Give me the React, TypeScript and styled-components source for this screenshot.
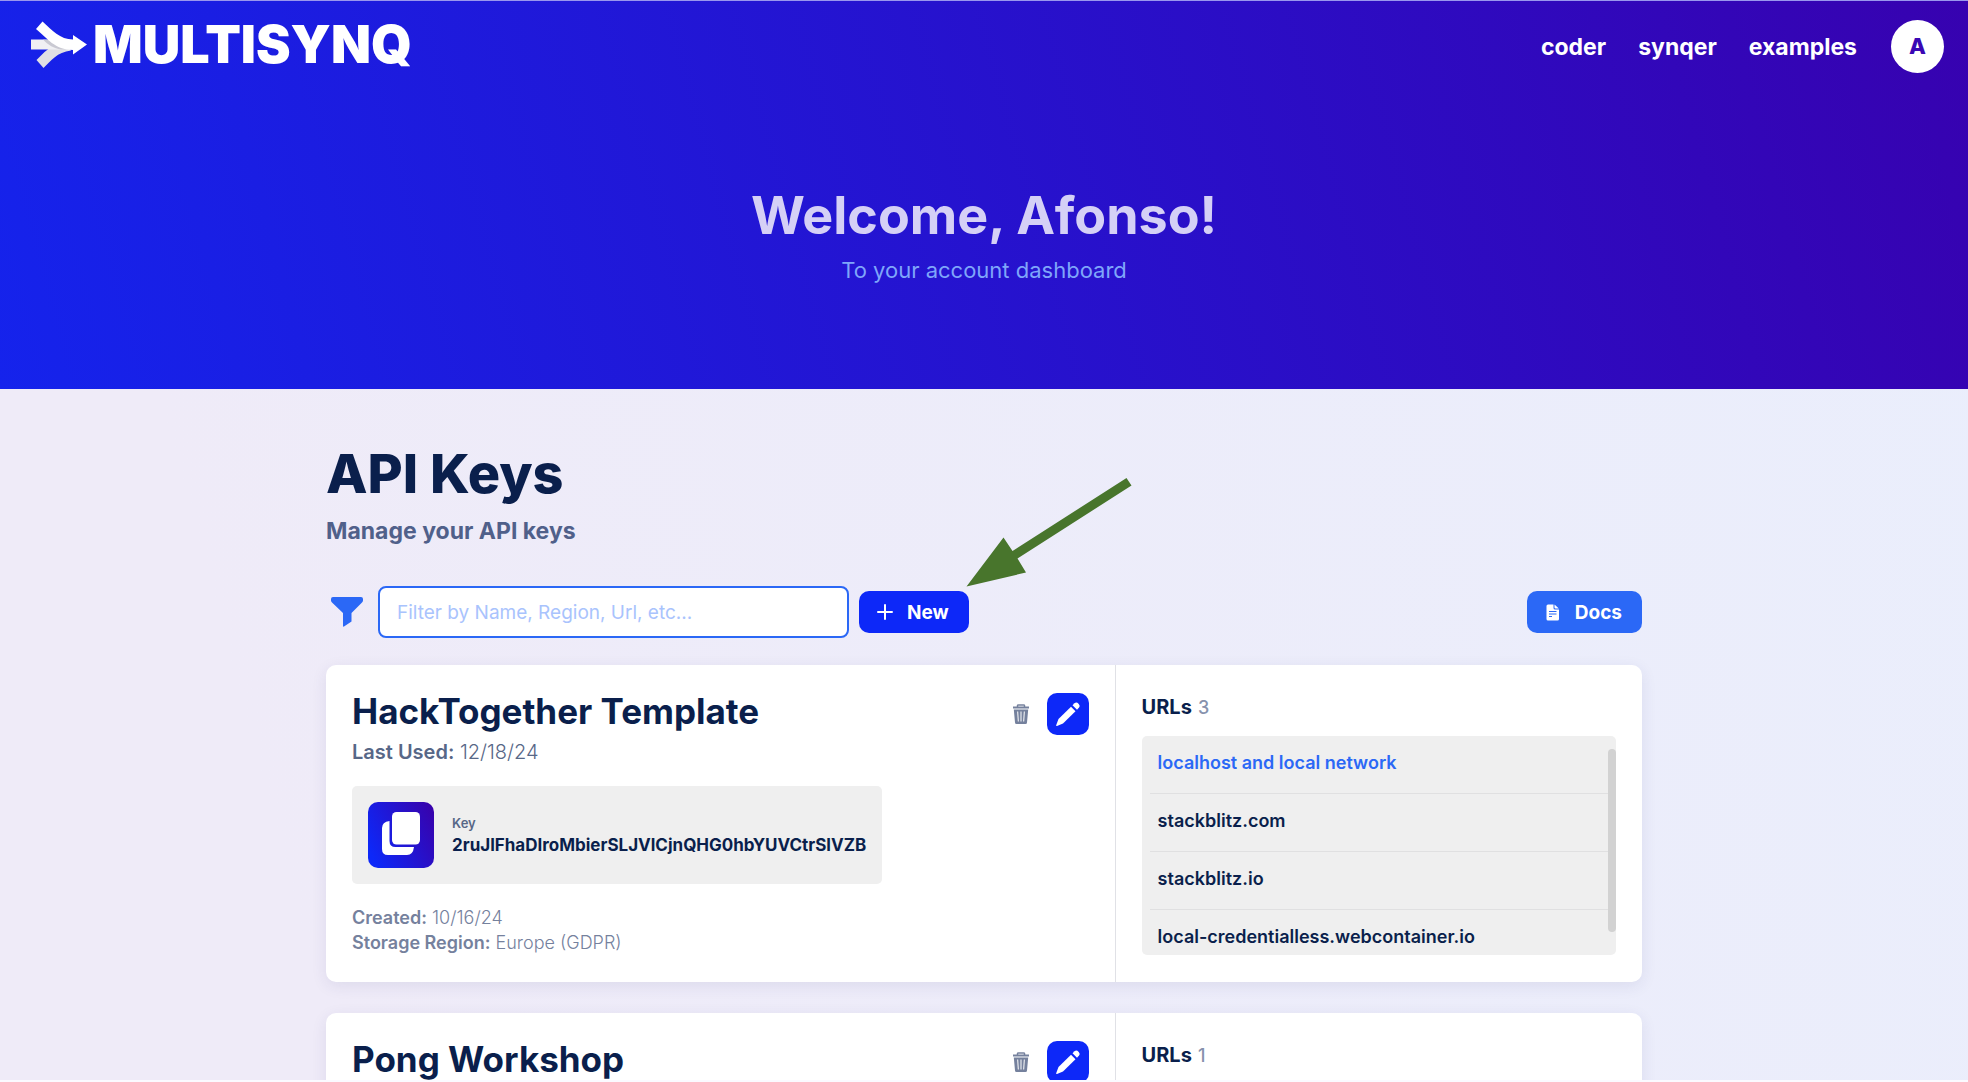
import React from 'react';
import styled, { createGlobalStyle } from 'styled-components';

const ink = '#0a1f4c';
const blue = '#2b68f6';
const strong = '#0d28f8';
const heroGradient = 'linear-gradient(75deg, #1523ec 0%, #3702b0 100%)';

const GlobalStyle = createGlobalStyle`
  * { box-sizing: border-box; }
  body {
    margin: 0;
    background: #ffffff;
    color: ${ink};
    font-family: Inter, "Liberation Sans", sans-serif;
  }
  h1, h2, h3, p, ul { margin: 0; padding: 0; }
  button, input { font: inherit; }
`;

const Shell = styled.div`
  height: 100vh;
  overflow-y: auto;
  scrollbar-width: none;
  border-top: 1px solid #9a97ee;
  border-bottom: 2px solid #fbfaff;
  background: linear-gradient(75deg, #efebf8 15%, #eaeefc 100%);
`;

const Hero = styled.header`
  min-height: 388px;
  background: ${heroGradient};
`;

const TopBar = styled.div`
  display: flex;
  align-items: center;
  justify-content: space-between;
  height: 90px;
  padding: 0 24px 0 31px;
`;

const Brand = styled.a`
  display: flex;
  align-items: center;
  gap: 4px;
  padding-bottom: 3px;
  color: #ffffff;
  text-decoration: none;
  font-size: 52px;
  line-height: 60px;
  font-weight: 900;
`;

const Nav = styled.nav`
  display: flex;
  align-items: center;
  gap: 32px;
`;

const NavLink = styled.a`
  padding-top: 2px;
  color: #ffffff;
  text-decoration: none;
  font-size: 23px;
  font-weight: 700;
`;

const Avatar = styled.button`
  width: 53px;
  height: 53px;
  margin-left: 2px;
  padding: 0;
  border: 0;
  border-radius: 50%;
  background: #ffffff;
  color: #3a07b4;
  font-size: 22px;
  font-weight: 800;
`;

const Welcome = styled.div`
  display: flex;
  flex-direction: column;
  align-items: center;
  gap: 8px;
  padding: 93px 24px 92px;
`;

const WelcomeTitle = styled.h1`
  color: #d5d0f6;
  font-size: 52px;
  line-height: 64px;
  font-weight: 700;
`;

const WelcomeText = styled.p`
  color: #7fa6fa;
  font-size: 22px;
  line-height: 28px;
`;

const Main = styled.main`
  width: 90%;
  max-width: 1316px;
  margin: 0 auto;
  padding: 53px 0 32px;
`;

const PageTitle = styled.h2`
  font-size: 54px;
  line-height: 64px;
  font-weight: 800;
`;

const PageText = styled.p`
  margin-top: 9px;
  color: #50608a;
  font-size: 23px;
  line-height: 32px;
  font-weight: 700;
`;

const Toolbar = styled.div`
  display: flex;
  align-items: center;
  gap: 10px;
  margin: 39px 0 27px;
`;

const FilterLabel = styled.label`
  display: flex;
  justify-content: center;
  width: 42px;
  color: ${blue};
`;

const FilterInput = styled.input`
  width: 471px;
  height: 52px;
  padding: 0 17px;
  border: 2px solid ${blue};
  border-radius: 8px;
  outline: 0;
  background: #ffffff;
  color: ${ink};
  font-size: 19px;
  &::placeholder { color: #a9c3fd; opacity: 1; }
`;

const Action = styled.button<{ $tone: string }>`
  display: flex;
  align-items: center;
  gap: 14px;
  height: 42px;
  padding: 0 20px 0 18px;
  border: 0;
  border-radius: 10px;
  background: ${(p) => p.$tone};
  color: #ffffff;
  font-size: 19px;
  font-weight: 700;
`;

const NewSlot = styled.div`
  position: relative;
`;

const Pointer = styled.svg`
  position: absolute;
  left: 107px;
  bottom: 46px;
  pointer-events: none;
`;

const Spacer = styled.div`
  flex: 1;
`;

const CardList = styled.div`
  display: flex;
  flex-direction: column;
  gap: 31px;
`;

const Card = styled.article`
  display: grid;
  grid-template-columns: 3fr 2fr;
  border-radius: 10px;
  background: #ffffff;
  box-shadow: 0 4px 16px rgba(40, 40, 110, 0.09);
`;

const Details = styled.section`
  padding: 24px 26px 26px;
  border-right: 1px solid #e0e1e6;
`;

const CardHead = styled.div`
  display: flex;
  align-items: flex-start;
  height: 46px;
`;

const CardTitle = styled.h3`
  flex: 1;
  font-size: 35px;
  line-height: 44px;
  font-weight: 700;
`;

const CardTools = styled.div`
  display: flex;
  align-items: center;
  gap: 17px;
  padding-top: 4px;
`;

const TrashButton = styled.button`
  display: flex;
  padding: 0;
  border: 0;
  background: none;
  color: #75819d;
`;

const EditButton = styled.button`
  display: flex;
  align-items: center;
  justify-content: center;
  width: 42px;
  height: 42px;
  padding: 0;
  border: 0;
  border-radius: 10px;
  background: ${strong};
  color: #ffffff;
`;

const LastUsed = styled.p`
  margin-top: 3px;
  color: #576787;
  font-size: 20px;
  line-height: 28px;
  font-weight: 300;
`;

const Strong = styled.b`
  font-weight: 600;
`;

const KeyBox = styled.div`
  display: flex;
  align-items: center;
  gap: 18px;
  width: fit-content;
  margin-top: 20px;
  padding: 16px;
  border-radius: 5px;
  background: #efefef;
`;

const CopyButton = styled.button`
  display: flex;
  align-items: center;
  justify-content: center;
  width: 66px;
  height: 66px;
  padding: 0;
  border: 0;
  border-radius: 10px;
  background: linear-gradient(65deg, #0d28f8 10%, #3a00a8 100%);
  color: #ffffff;
`;

const KeyLabel = styled.div`
  color: #576787;
  font-size: 13px;
  line-height: 20px;
  font-weight: 600;
`;

const KeyValue = styled.div`
  font-size: 17px;
  line-height: 24px;
  font-weight: 700;
`;

const Meta = styled.div`
  margin-top: 21px;
  color: #75819d;
  font-size: 18px;
  line-height: 25px;
  font-weight: 300;
`;

const Urls = styled.section`
  padding: 26px 26px 27px;
`;

const UrlsTitle = styled.h3`
  display: flex;
  align-items: baseline;
  gap: 6px;
  font-size: 20px;
  line-height: 32px;
  font-weight: 700;
`;

const Count = styled.span`
  color: #8792ad;
  font-size: 18px;
  font-weight: 500;
`;

const UrlFrame = styled.div`
  position: relative;
  margin-top: 12px;
  border-radius: 5px;
  background: #efefef;
`;

const UrlList = styled.ul`
  max-height: 219px;
  padding: 0 8px;
  overflow-y: auto;
  scrollbar-width: none;
  list-style: none;
`;

const UrlItem = styled.li<{ $local?: boolean }>`
  padding: 14px 8px 17px;
  color: ${(p) => (p.$local ? blue : ink)};
  font-size: 18px;
  line-height: 26px;
  font-weight: 600;
  & + & { border-top: 1px solid #e0e0e1; }
`;

const Thumb = styled.span`
  position: absolute;
  top: 13px;
  right: 0;
  width: 8px;
  height: 183px;
  border-radius: 4px;
  background: #d2d2d2;
`;

const LogoMark = () => (
  <svg width="58" height="48" viewBox="0 0 58 48" aria-hidden="true">
    <path d="M5.500 39L12.500 47C20 40 26 31 40 29.500L38 27L22 25C16 28 11 33.500 5.500 39Z" fill="#e0e0e4" />
    <path d="M0 18.500H18L40 28.500H0Z" fill="#f0f0f3" />
    <path d="M17 19L40 28.500H30C23 27.500 17 24 12 18.500Z" fill="#c9c9d2" />
    <path d="M11.500 0.500L5 8C16 17 24 29 42 29V33.500L56 23.500L42 14V18.500C29 18.500 21 9 11.500 0.500Z" fill="#ffffff" />
  </svg>
);

const FunnelIcon = () => (
  <svg width="32" height="30" viewBox="0 0 32 30" fill="currentColor" aria-hidden="true">
    <path d="M2 0H30Q32 0 32 2V3.500Q32 4.500 31 5.500L20.500 16V24.500L13 29.600Q12 30 12 29V16L1 5.500Q0 4.500 0 3.500V2Q0 0 2 0Z" />
  </svg>
);

const PlusIcon = () => (
  <svg width="16" height="16" viewBox="0 0 16 16" stroke="currentColor" strokeWidth="2" strokeLinecap="round" aria-hidden="true">
    <path d="M8 1V15M1 8H15" />
  </svg>
);

const DocIcon = () => (
  <svg width="16" height="17" viewBox="0 0 16 17" aria-hidden="true">
    <path d="M3 0.500H8.500V4Q8.500 5.500 10 5.500H14V15Q14 16.500 12.500 16.500H3Q1.500 16.500 1.500 15V2Q1.500 0.500 3 0.500Z" fill="currentColor" />
    <path d="M9.500 0.500L13.800 4.500H10.500Q9.500 4.500 9.500 3.500Z" fill="currentColor" />
    <path d="M4 7.500H11.500M4 10H11.500M4 12.500H7" stroke={blue} strokeWidth="1" />
  </svg>
);

const TrashIcon = () => (
  <svg width="18" height="20" viewBox="0 0 18 20" aria-hidden="true">
    <path d="M5.500 3V1.600Q5.500 1 6.500 1H11.500Q12.500 1 12.500 1.600V3" fill="none" stroke="currentColor" strokeWidth="1.500" />
    <path d="M1 2.500H17V4.500H1Z" fill="currentColor" />
    <path d="M1.800 5.500H16.200L15 18.500Q15 20 13.500 20H4.500Q3 20 3 18.500Z" fill="currentColor" />
    <path d="M5.700 7.500L6.300 17.500M9 7.500V17.500M12.300 7.500L11.700 17.500" stroke="#ffffff" strokeWidth="1" />
  </svg>
);

const PencilIcon = () => (
  <svg width="24" height="24" viewBox="0 0 24 24" fill="currentColor" aria-hidden="true">
    <path d="M15 4.800L19.500 9.200L7 21.500L1 24Q0 24.200 0.200 23.200L2.500 17Z" />
    <path d="M16.500 3.300L18.500 1.300Q20.500 -0.300 22.500 1.700Q24.500 3.700 23 5.600L21 7.700Z" />
  </svg>
);

const CopyIcon = () => (
  <svg width="40" height="50" viewBox="0 0 40 50" fill="currentColor" aria-hidden="true">
    <path d="M8.500 11V31Q8.500 37 14.500 37H33Q32 45 26 45H7Q1 45 1 39V18Q1 12 8.500 11Z" />
    <rect x="11" y="2" width="28" height="32.500" rx="4.500" />
  </svg>
);

type ApiKey = { name: string; used: string; token: string; created: string; region: string; count: number; urls: string[] };

const keys: ApiKey[] = [
  {
    name: 'HackTogether Template',
    used: '12/18/24',
    token: '2ruJlFhaDIroMbierSLJVlCjnQHG0hbYUVCtrSlVZB',
    created: '10/16/24',
    region: 'Europe (GDPR)',
    count: 3,
    urls: ['localhost and local network', 'stackblitz.com', 'stackblitz.io', 'local-credentialless.webcontainer.io'],
  },
  { name: 'Pong Workshop', used: '', token: '', created: '', region: '', count: 1, urls: [] },
];

const KeyCard = ({ item }: { item: ApiKey }) => (
  <Card>
    <Details>
      <CardHead>
        <CardTitle>{item.name}</CardTitle>
        <CardTools>
          <TrashButton aria-label="Delete"><TrashIcon /></TrashButton>
          <EditButton aria-label="Edit"><PencilIcon /></EditButton>
        </CardTools>
      </CardHead>
      {item.token && (
        <>
          <LastUsed><Strong>Last Used:</Strong> {item.used}</LastUsed>
          <KeyBox>
            <CopyButton aria-label="Copy key"><CopyIcon /></CopyButton>
            <div>
              <KeyLabel>Key</KeyLabel>
              <KeyValue>{item.token}</KeyValue>
            </div>
          </KeyBox>
          <Meta>
            <p><Strong>Created:</Strong> {item.created}</p>
            <p><Strong>Storage Region:</Strong> {item.region}</p>
          </Meta>
        </>
      )}
    </Details>
    <Urls>
      <UrlsTitle>URLs <Count>{item.count}</Count></UrlsTitle>
      {item.urls.length > 0 && (
        <UrlFrame>
          <UrlList>
            {item.urls.map((url, i) => <UrlItem key={url} $local={i === 0}>{url}</UrlItem>)}
          </UrlList>
          <Thumb />
        </UrlFrame>
      )}
    </Urls>
  </Card>
);

export default function App() {
  return (
    <Shell>
      <GlobalStyle />
      <Hero>
        <TopBar>
          <Brand href="#"><LogoMark />MULTISYNQ</Brand>
          <Nav>
            <NavLink href="#coder">coder</NavLink>
            <NavLink href="#synqer">synqer</NavLink>
            <NavLink href="#examples">examples</NavLink>
            <Avatar>A</Avatar>
          </Nav>
        </TopBar>
        <Welcome>
          <WelcomeTitle>Welcome, Afonso!</WelcomeTitle>
          <WelcomeText>To your account dashboard</WelcomeText>
        </Welcome>
      </Hero>
      <Main>
        <PageTitle>API Keys</PageTitle>
        <PageText>Manage your API keys</PageText>
        <Toolbar>
          <FilterLabel htmlFor="filter" aria-label="Filter"><FunnelIcon /></FilterLabel>
          <FilterInput id="filter" placeholder="Filter by Name, Region, Url, etc..." />
          <NewSlot>
            <Action $tone={strong}><PlusIcon />New</Action>
            <Pointer width="166" height="110" viewBox="0 0 166 110" aria-hidden="true">
              <path d="M0.500 109.500L37.500 60.500L46.500 74L160.500 1L165.500 8.500L51.500 81.500L60 95.500Z" fill="#48752c" />
            </Pointer>
          </NewSlot>
          <Spacer />
          <Action $tone={blue}><DocIcon />Docs</Action>
        </Toolbar>
        <CardList>
          {keys.map((item) => <KeyCard key={item.name} item={item} />)}
        </CardList>
      </Main>
    </Shell>
  );
}
